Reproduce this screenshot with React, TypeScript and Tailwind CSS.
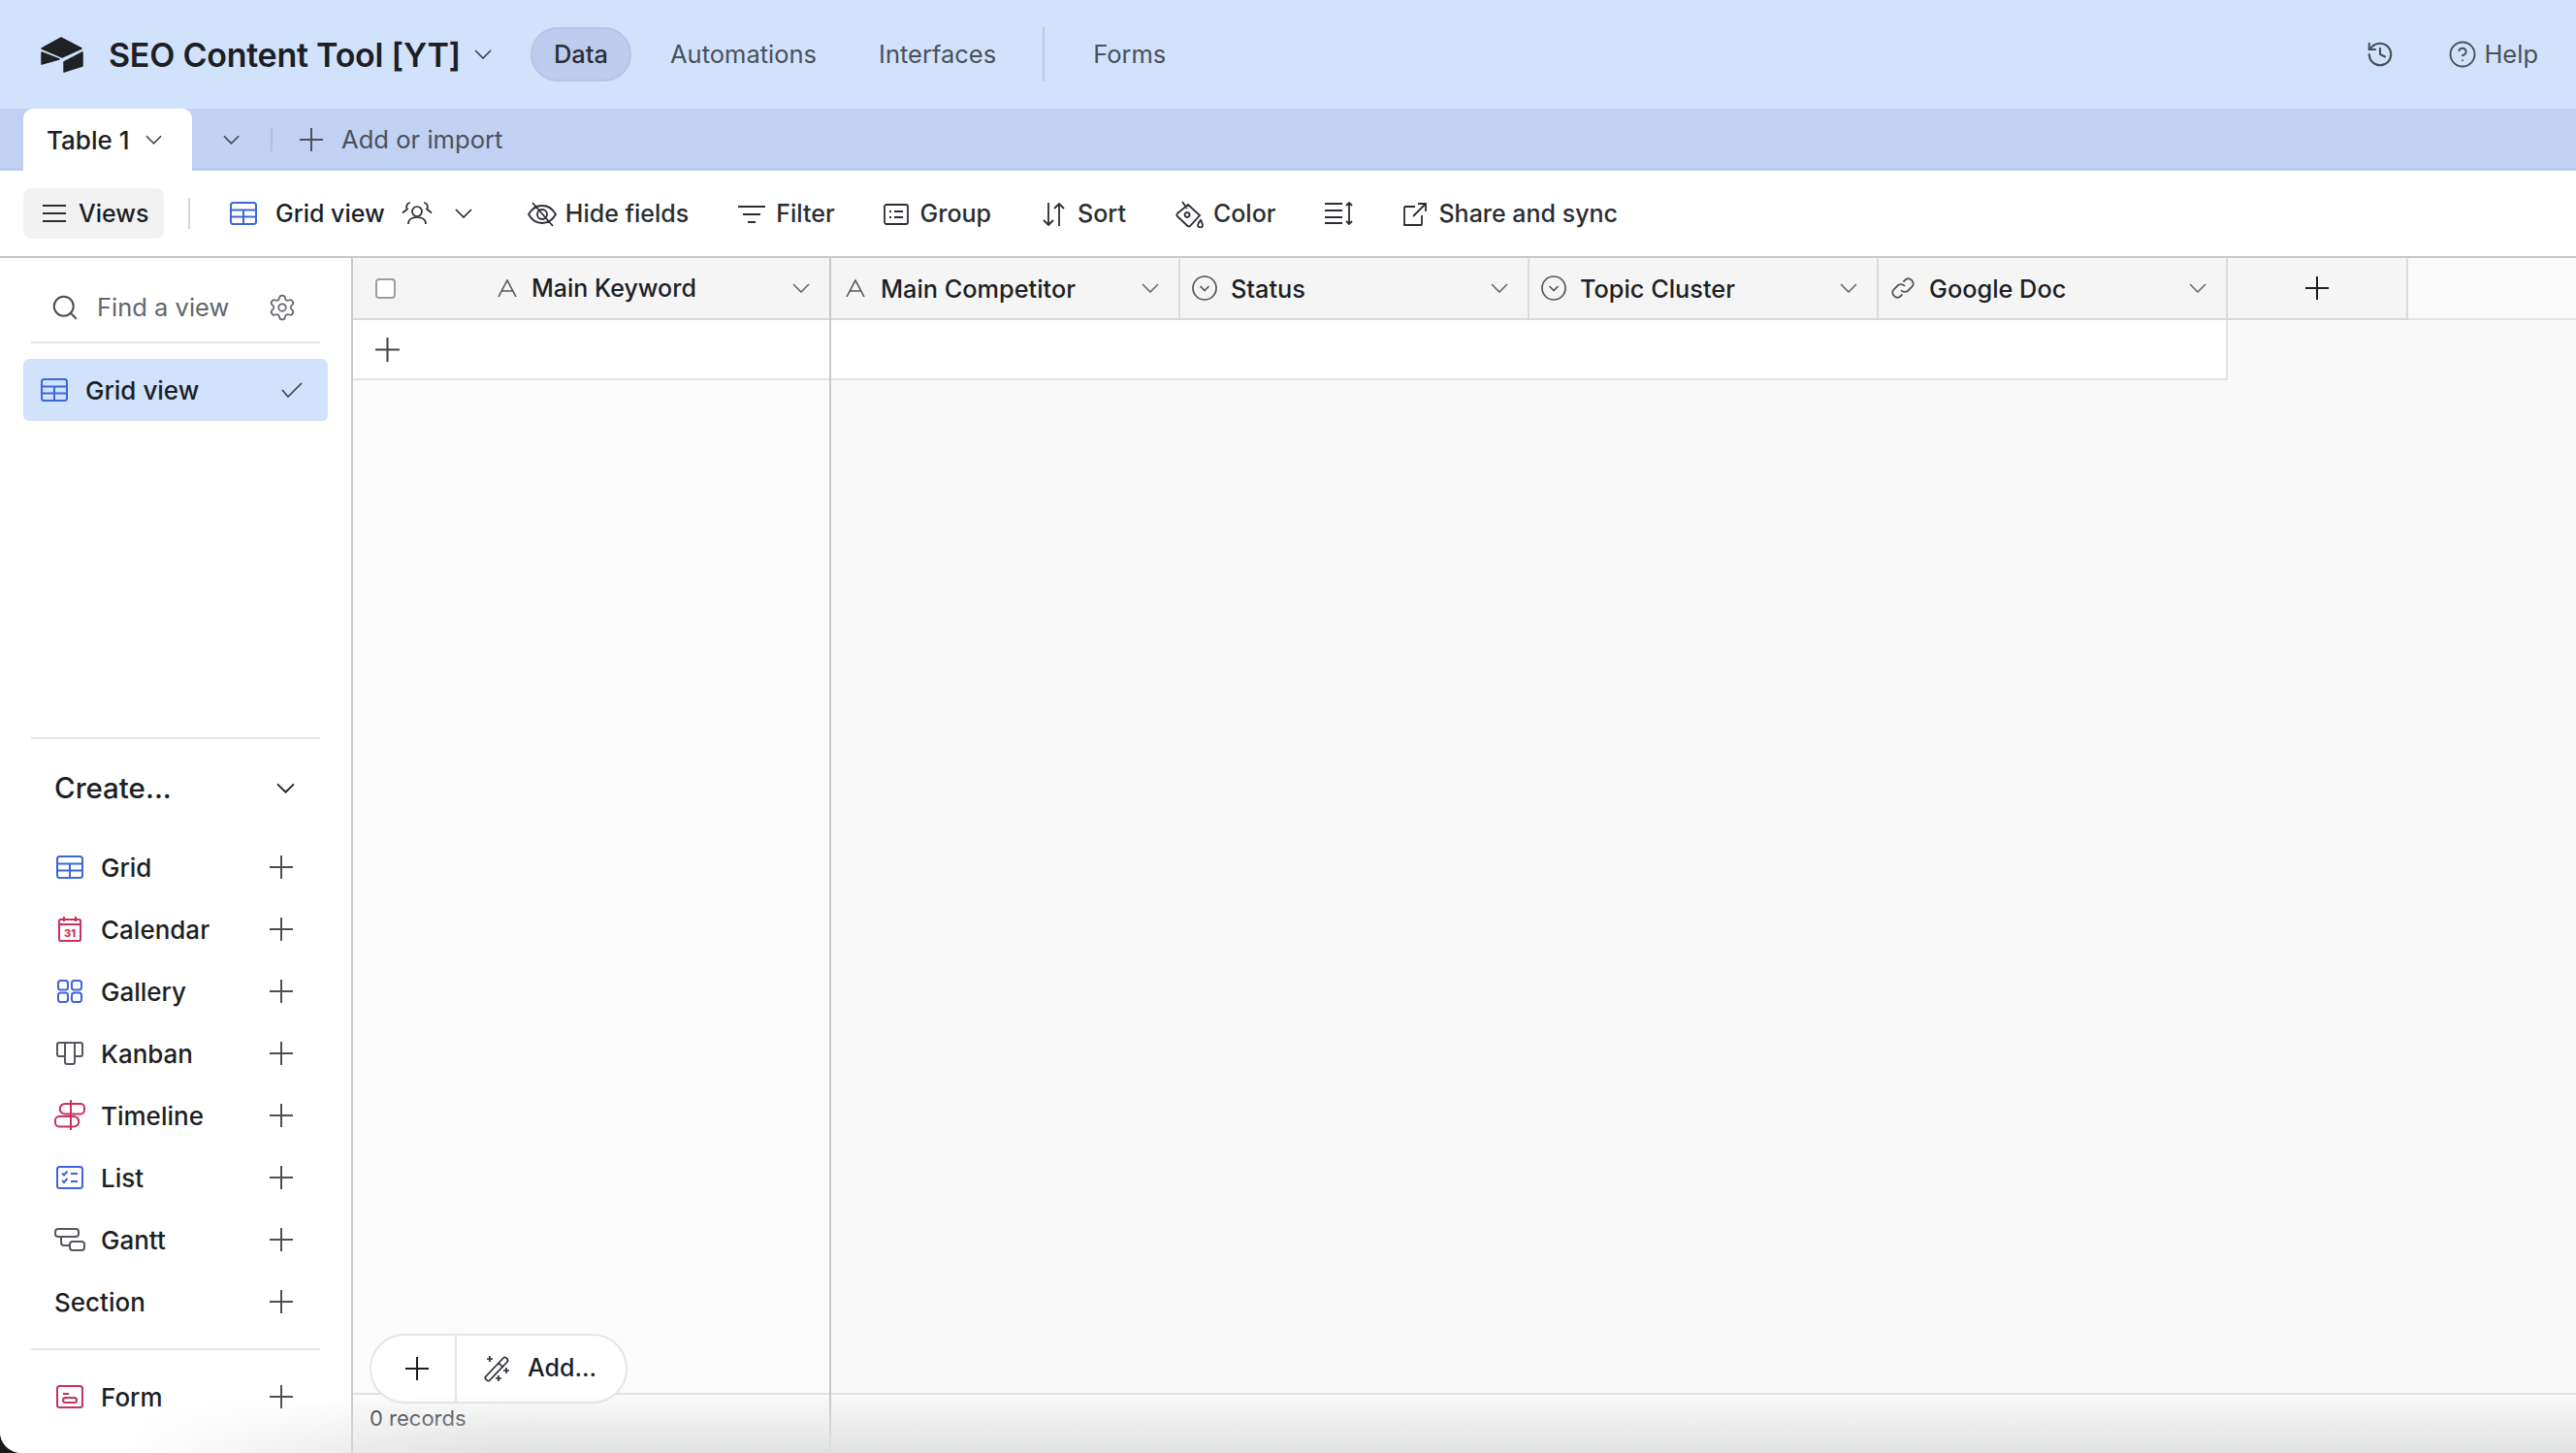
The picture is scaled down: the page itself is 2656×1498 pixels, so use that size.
import { ReactNode } from 'react'
import { CircleHelp, History, Search, Settings } from 'lucide-react'

const BLUE = '#3d66d6'
const RED = '#c9305a'
const GRAY = '#53565c'

function Chevron({ className = 'w-[18px] h-[10px]', color = '#41454b' }: { className?: string; color?: string }) {
  return (
    <svg viewBox="0 0 18 10" fill="none" className={className}>
      <path d="M1 1l8 8 8-8" stroke={color} strokeWidth="1.7" />
    </svg>
  )
}

function Plus({ size = 24, color = '#4c4f55' }: { size?: number; color?: string }) {
  return (
    <svg width={size} height={size} viewBox="0 0 24 24" fill="none">
      <path d="M12 0v24M0 12h24" stroke={color} strokeWidth="2" />
    </svg>
  )
}

function GridIcon() {
  return (
    <svg width="28" height="24" viewBox="0 0 28 24" fill="none" stroke={BLUE} strokeWidth="2">
      <rect x="1" y="1" width="26" height="22" rx="2.5" />
      <path d="M1 8.5h26M1 15.5h26M14 8.5v14.5" />
    </svg>
  )
}

function CalendarIcon() {
  return (
    <svg width="24" height="26" viewBox="0 0 24 26" fill="none" stroke={RED} strokeWidth="2">
      <rect x="1" y="3" width="22" height="22" rx="1.5" />
      <path d="M1 8h22M6 0v5M18 0v5" />
      <text x="12" y="21" textAnchor="middle" fontSize="11" fontWeight="800" fill={RED} stroke="none" fontFamily="Inter, sans-serif">31</text>
    </svg>
  )
}

function GalleryIcon() {
  return (
    <svg width="26" height="24" viewBox="0 0 26 24" fill="none" stroke={BLUE} strokeWidth="2">
      <rect x="1" y="1" width="10" height="9.5" rx="2.5" />
      <rect x="15" y="1" width="10" height="9.5" rx="2.5" />
      <rect x="1" y="13.5" width="10" height="9.5" rx="2.5" />
      <rect x="15" y="13.5" width="10" height="9.5" rx="2.5" />
    </svg>
  )
}

function KanbanIcon() {
  return (
    <svg width="28" height="24" viewBox="0 0 28 24" fill="none" stroke={GRAY} strokeWidth="2">
      <path d="M9 15H3a2 2 0 0 1-2-2V3a2 2 0 0 1 2-2h22a2 2 0 0 1 2 2v10a2 2 0 0 1-2 2h-6" />
      <path d="M9 1v20a2 2 0 0 0 2 2h6a2 2 0 0 0 2-2V1" />
    </svg>
  )
}

function TimelineIcon() {
  return (
    <svg width="32" height="32" viewBox="0 0 32 32" fill="none" stroke={RED} strokeWidth="2">
      <path d="M17 0v31" />
      <path d="M17 4h10a4 4 0 0 1 4 4v2.500a4 4 0 0 1-4 4H11a5.250 5.250 0 0 1 0-10.500h6" />
      <path d="M17 17H5a4 4 0 0 0-4 4v2.500a4 4 0 0 0 4 4h15a5.250 5.250 0 0 0 0-10.500h-3" />
    </svg>
  )
}

function ListIcon() {
  return (
    <svg width="28" height="24" viewBox="0 0 28 24" fill="none" stroke={BLUE} strokeWidth="2">
      <rect x="1" y="1" width="26" height="22" rx="2.5" />
      <path d="M6 7.500l2 2 3.500-4M6 15l2 2 3.500-4M15 8h7M15 16h7" />
    </svg>
  )
}

function GanttIcon() {
  return (
    <svg width="32" height="24" viewBox="0 0 32 24" fill="none" stroke={GRAY} strokeWidth="2">
      <rect x="1" y="1" width="24" height="8" rx="3" />
      <rect x="16" y="14" width="15" height="9" rx="3" />
      <path d="M7 9v6a3 3 0 0 0 3 3h6" />
    </svg>
  )
}

function FormIcon() {
  return (
    <svg width="28" height="24" viewBox="0 0 28 24" fill="none" stroke={RED} strokeWidth="2">
      <rect x="1" y="1" width="26" height="22" rx="2.5" />
      <path d="M7 9h6" />
      <rect x="7" y="13" width="14" height="5" rx="2.5" />
    </svg>
  )
}

function TextField() {
  return (
    <svg width="20" height="18" viewBox="0 0 20 18" fill="none" stroke="#53565c" strokeWidth="1.6">
      <path d="M1 18L10 1l9 17M4 12h12" />
    </svg>
  )
}

function SelectField() {
  return (
    <svg width="26" height="26" viewBox="0 0 26 26" fill="none" stroke="#53565c" strokeWidth="1.7">
      <circle cx="13" cy="13" r="12" />
      <path d="M8.500 11l4.500 4.500 4.500-4.500" />
    </svg>
  )
}

function LinkField() {
  return (
    <svg width="26" height="26" viewBox="0 0 26 26" fill="none" stroke="#53565c" strokeWidth="1.8">
      <path d="M11 15a5 5 0 0 0 7.500.500l4-4a5 5 0 0 0-7-7l-2 2" />
      <path d="M15 11a5 5 0 0 0-7.500-.500l-4 4a5 5 0 0 0 7 7l2-2" />
    </svg>
  )
}

function ToolIcon({ d, w = 30, h = 30 }: { d: string; w?: number; h?: number }) {
  return (
    <svg width={w} height={h} viewBox={`0 0 ${w} ${h}`} fill="none" stroke="#2a2d33" strokeWidth="1.8" className="shrink-0">
      <path d={d} />
    </svg>
  )
}

function ToolItem({ icon, label, ml, gap }: { icon: ReactNode; label: string; ml: string; gap: string }) {
  return (
    <div className={`flex items-center ${ml} ${gap}`}>
      {icon}
      <span>{label}</span>
    </div>
  )
}

function TopBar() {
  return (
    <header className="h-[112px] shrink-0 bg-[#d1e2fd] flex items-center pl-[42px] pr-[39px]">
      <svg width="44" height="37" viewBox="0 0 44 37" fill="#1f2125" stroke="#1f2125" strokeLinejoin="round" strokeWidth="1.500">
        <path d="M1 12L21 1l21 11-20 9z" />
        <path d="M1 16l18 7-18 5z" />
        <path d="M24 26l19-10v14l-19 6z" />
      </svg>
      <span className="ml-[26px] text-[34px] font-semibold text-[#1d1f25] tracking-[-0.25px]">SEO Content Tool [YT]</span>
      <Chevron className="ml-[14px] w-[18px] h-[10px]" />
      <div className="ml-[40px] w-[104px] h-[56px] rounded-[28px] bg-[#bccdf0] border-2 border-[#b4c5e8] flex items-center justify-center text-[25.500px] font-medium text-[#2c3038]">Data</div>
      <span className="ml-[40px] text-[25.500px] text-[#4c5057]">Automations</span>
      <span className="ml-[64px] text-[25.500px] text-[#4c5057]">Interfaces</span>
      <div className="ml-[48px] w-[2px] h-[56px] bg-[#b8c9ea]" />
      <span className="ml-[50px] text-[25.500px] text-[#4c5057]">Forms</span>
      <div className="ml-auto flex items-center text-[25.500px] text-[#4c5057]">
        <History size={30} strokeWidth={1.7} color="#4c5057" />
        <CircleHelp size={30} strokeWidth={1.5} color="#4c5057" className="ml-[55px]" />
        <span className="ml-[7px]">Help</span>
      </div>
    </header>
  )
}

function TabBar() {
  return (
    <div className="h-[64px] shrink-0 bg-[#c0d1f3] border-b-[3px] border-[#b9caec] flex items-start pl-[24px]">
      <div className="w-[174px] h-[64px] bg-white rounded-t-[10px] flex items-center pl-[24px] text-[26px] font-medium text-[#1d1f25]">
        Table 1
        <Chevron className="ml-[17px] w-[17px] h-[10px]" />
      </div>
      <div className="h-[61px] pt-[2px] flex items-center text-[25.600px] text-[#4c5057]">
        <Chevron className="ml-[32px] w-[17px] h-[10px]" />
        <div className="ml-[32px] w-[2px] h-[24px] bg-[#adbfe2]" />
        <div className="ml-[28px]"><Plus color="#4c5057" /></div>
        <span className="ml-[19px] pt-[1px]">Add or import</span>
      </div>
    </div>
  )
}

function Toolbar() {
  return (
    <div className="h-[90px] shrink-0 bg-white border-b-2 border-[#c8c8c8] flex items-center pl-[24px] text-[25px] font-medium text-[#2a2d33]">
      <div className="w-[145px] h-[52px] rounded-[8px] bg-[#f2f2f2] flex items-center pl-[20px] gap-[13px] text-[#1d1f25]">
        <ToolIcon w={24} h={20} d="M0 2h24M0 10h24M0 18h24" />
        <span className="pt-[1px]">Views</span>
      </div>
      <div className="ml-[25px] w-[2px] h-[32px] bg-[#d6d6d6]" />
      <div className="ml-[41px]"><GridIcon /></div>
      <span className="ml-[19px] pt-[1px] text-[#1d1f25]">Grid view</span>
      <svg width="32" height="24" viewBox="0 0 32 24" fill="none" stroke="#2a2d33" strokeWidth="1.700" className="ml-[17px]">
        <circle cx="16" cy="10" r="5" />
        <path d="M7 23c0-4 3-7 9-7s9 3 9 7" />
        <path d="M9 1a4 4 0 0 0-3 6.500L1 11.500M23 1a4 4 0 0 1 3 6.500l5 4" />
      </svg>
      <Chevron className="ml-[23px] w-[18px] h-[10px]" color="#2a2d33" />
      <ToolItem ml="ml-[57px] pt-[1px]" gap="gap-[9px]" label="Hide fields" icon={<ToolIcon w={30} h={26} d="M1 13C5 6 10 4 15 4s10 2 14 9c-4 7-9 9-14 9S5 20 1 13zM10 13a5 5 0 0 1 10 0 5 5 0 0 1-10 0zM5 1l21 24" />} />
      <ToolItem ml="ml-[51px] pt-[1px]" gap="gap-[11px]" label="Filter" icon={<ToolIcon w={28} h={20} d="M0 2h28M5 10h18M10 18h8" />} />
      <ToolItem ml="ml-[50px] pt-[1px]" gap="gap-[12px]" label="Group" icon={<ToolIcon w={26} h={22} d="M3 1h20a2 2 0 0 1 2 2v16a2 2 0 0 1-2 2H3a2 2 0 0 1-2-2V3a2 2 0 0 1 2-2zM6 8h2M6 14h2M11 8h9M11 14h9" />} />
      <ToolItem ml="ml-[53px] pt-[1px]" gap="gap-[13px]" label="Sort" icon={<ToolIcon w={23} h={24} d="M6 0v23M1 18l5 5 5-5M17 24V1M12 6l5-5 5 5" />} />
      <ToolItem ml="ml-[50px] pt-[1px]" gap="gap-[9px]" label="Color" icon={<ToolIcon w={31} h={28} d="M3 13L14 4l12 11-10 11a2 2 0 0 1-2.500 0L3 16a2 2 0 0 1 0-3zM8 1l5 7M13 12a2.500 2.500 0 1 0 .1 0M27 20c-2 2-3 4-3 5a2.500 2.500 0 0 0 5 0c0-1-1-3-2-5z" />} />
      <div className="ml-[51px]">
        <ToolIcon w={29} h={24} d="M0 2h18M0 9h18M0 16h18M0 22h18M25 1v22M22 4l3-3 3 3M22 20l3 3 3-3" />
      </div>
      <ToolItem ml="ml-[52px] pt-[1px]" gap="gap-[12px]" label="Share and sync" icon={<ToolIcon w={24} h={24} d="M12 4H2a1 1 0 0 0-1 1v18h17a1 1 0 0 0 1-1V13M10 14L23 1M15 1h8v8" />} />
    </div>
  )
}

const createRows = [
  { label: 'Grid', icon: <GridIcon /> },
  { label: 'Calendar', icon: <CalendarIcon /> },
  { label: 'Gallery', icon: <GalleryIcon /> },
  { label: 'Kanban', icon: <KanbanIcon /> },
  { label: 'Timeline', icon: <TimelineIcon /> },
  { label: 'List', icon: <ListIcon /> },
  { label: 'Gantt', icon: <GanttIcon /> },
]

function CreateRow({ label, icon }: { label: string; icon?: ReactNode }) {
  return (
    <div className="h-[64px] flex items-center pl-[56px] pr-[60px] text-[26px] font-medium text-[#1d1f25]">
      {icon && <div className="w-[32px] flex justify-center">{icon}</div>}
      <span className={icon ? 'ml-[16px]' : ''}>{label}</span>
      <div className="ml-auto"><Plus /></div>
    </div>
  )
}

function Sidebar() {
  return (
    <aside className="w-[364px] shrink-0 bg-white border-r-2 border-[#c8c9cd] flex flex-col">
      <div className="h-[86px] shrink-0 flex items-center pt-[16px] pl-[52px] pr-[56px] text-[25.500px] text-[#63666c]">
        <Search size={30} strokeWidth={1.6} color="#4c4f55" />
        <span className="ml-[18px]">Find a view</span>
        <Settings size={30} strokeWidth={1.4} color="#63666c" className="ml-auto" />
      </div>
      <div className="mx-[32px] h-[2px] shrink-0 bg-[#e5e5e5]" />
      <div className="mt-[16px] mx-[24px] h-[64px] shrink-0 rounded-[6px] bg-[#d1e2fd] flex items-center pl-[18px] pr-[26px] text-[26px] font-medium text-[#1d1f25]">
        <GridIcon />
        <span className="ml-[18px]">Grid view</span>
        <svg width="22" height="16" viewBox="0 0 22 16" fill="none" stroke="#41454b" strokeWidth="1.700" className="ml-auto">
          <path d="M1 8l6 7L21 1" />
        </svg>
      </div>
      <div className="flex-1" />
      <div className="mx-[32px] h-[2px] shrink-0 bg-[#e5e5e5]" />
      <div className="h-[100px] shrink-0 flex items-center pl-[56px] pr-[58px] text-[29.500px] font-medium text-[#1d1f25]">
        Create...
        <Chevron className="ml-auto w-[19px] h-[11px]" color="#1d1f25" />
      </div>
      {createRows.map((r) => (
        <CreateRow key={r.label} label={r.label} icon={r.icon} />
      ))}
      <CreateRow label="Section" />
      <div className="mt-[16px] mx-[32px] h-[2px] shrink-0 bg-[#e5e5e5]" />
      <div className="mt-[16px]">
        <CreateRow label="Form" icon={<FormIcon />} />
      </div>
      <div className="h-[26px] shrink-0" />
    </aside>
  )
}

const columns = [
  { label: 'Main Competitor', icon: <TextField /> },
  { label: 'Status', icon: <SelectField /> },
  { label: 'Topic Cluster', icon: <SelectField /> },
  { label: 'Google Doc', icon: <LinkField /> },
]

function ColumnHead({ label, icon }: { label: string; icon: ReactNode }) {
  const isText = label === 'Main Competitor'
  return (
    <div className={`w-[360px] h-[62px] shrink-0 border-r-2 border-[#dcdcdc] flex items-center ${isText ? 'pl-[15px]' : 'pl-[12px]'} pr-[20px] text-[25.300px] font-medium text-[#1d1f25]`}>
      {icon}
      <span className={isText ? 'ml-[16px] pt-[1px]' : 'ml-[14px] pt-[1px]'}>{label}</span>
      <Chevron className="ml-auto w-[18px] h-[10px]" color="#6a6d73" />
    </div>
  )
}

function Grid() {
  return (
    <main className="relative flex-1 flex min-w-0 bg-[#f9f9f9]">
      <div className="w-[493px] shrink-0 bg-[#fbfbfb] border-r-2 border-[#c8c9cd] flex flex-col">
        <div className="h-[64px] shrink-0 bg-[#f5f5f5] border-b-2 border-[#d9d9d9] flex items-center pl-[23px] pr-[20px] text-[25px] font-medium text-[#1d1f25]">
          <div className="w-[21px] h-[21px] rounded-[4px] border-2 border-[#9a9da3] bg-white" />
          <div className="ml-[105px]"><TextField /></div>
          <span className="ml-[15px] pt-[2px]">Main Keyword</span>
          <Chevron className="ml-auto w-[18px] h-[10px]" color="#6a6d73" />
        </div>
        <div className="h-[62px] shrink-0 bg-white border-b-2 border-[#e2e2e2] flex items-center pl-[23px]">
          <Plus size={25} color="#41454b" />
        </div>
        <div className="flex-1" />
        <div className="h-[62px] shrink-0 border-t-2 border-[#e2e2e2] flex items-center pl-[17px] pb-[12px] text-[22px] text-[#2a2d33]">0 records</div>
      </div>
      <div className="flex-1 flex flex-col min-w-0">
        <div className="h-[64px] shrink-0 flex border-b-2 border-[#e2e2e2] bg-[#fafafa]">
          <div className="flex border-b-2 border-[#d9d9d9] -mb-[2px] bg-[#f5f5f5]">
            {columns.map((c) => (
              <ColumnHead key={c.label} label={c.label} icon={c.icon} />
            ))}
            <div className="w-[186px] h-[62px] border-r-2 border-[#dcdcdc] flex items-center justify-center">
              <Plus color="#1d1f25" />
            </div>
          </div>
        </div>
        <div className="w-[1440px] h-[62px] shrink-0 bg-white border-b-2 border-r-2 border-[#e2e2e2]" />
        <div className="flex-1" />
        <div className="h-[62px] shrink-0 border-t-2 border-[#e2e2e2]" />
      </div>
      {/* floating add button */}
      <div className="absolute left-[17px] bottom-[51px] h-[72px] w-[266px] rounded-[36px] bg-white border-2 border-[#e5e5e5] flex items-center text-[25px] font-medium text-[#1d1f25]">
        <div className="w-[88px] h-full border-r-2 border-[#e5e5e5] flex items-center justify-center pl-[8px]">
          <Plus color="#1d1f25" />
        </div>
        <svg width="28" height="28" viewBox="0 0 28 28" fill="none" stroke="#2a2d33" strokeWidth="1.700" className="ml-[28px]">
          <path d="M2 22L20 3a2 2 0 0 1 3 0l1 1a2 2 0 0 1 0 3L6 26a2 2 0 0 1-3 0l-1-1a2 2 0 0 1 0-3zM15 8l5 5" />
          <path d="M6 1v6M3 4h6M23 13v6M20 16h6M15 21v6M12 24h6" />
        </svg>
        <span className="ml-[17px]">Add...</span>
      </div>
    </main>
  )
}

export default function App() {
  return (
    <div className="w-[2656px] h-[1498px] bg-[#1a1a1a] overflow-hidden" style={{ fontFamily: 'Inter, "Liberation Sans", sans-serif' }}>
      <div className="relative w-full h-full rounded-bl-[22px] overflow-hidden bg-white flex flex-col">
        <TopBar />
        <TabBar />
        <Toolbar />
        <div className="flex-1 flex min-h-0">
          <Sidebar />
          <Grid />
        </div>
        {/* window shadow at the bottom edge */}
        <div className="pointer-events-none absolute left-[120px] right-0 bottom-0 h-[60px] bg-gradient-to-b from-transparent to-[#dfe0e0] [mask-image:linear-gradient(to_right,transparent,black_400px)]" />
      </div>
    </div>
  )
}
